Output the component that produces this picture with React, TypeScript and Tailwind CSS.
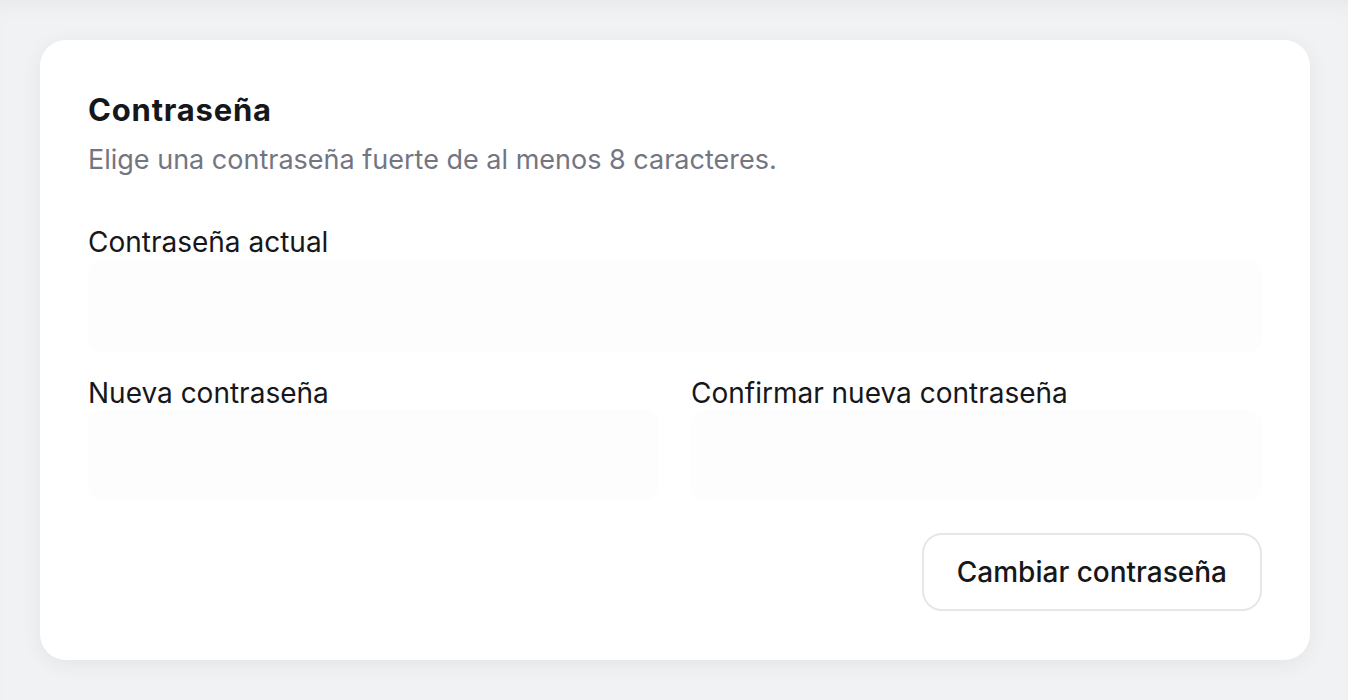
export default function App() {
  return (
    <div
      className="min-h-[700px] w-full bg-[#f1f2f4] pt-10 pl-10 pr-[38px] pb-10 shadow-[inset_0_16px_24px_-14px_rgba(0,0,0,0.05)]"
      style={{ fontFamily: "Inter, 'Noto Sans', sans-serif" }}
    >
      {/* Card */}
      <div className="rounded-[26px] bg-white px-12 pt-[52px] pb-[49px] shadow-[0_4px_22px_rgba(20,24,40,0.06)]">
        <h2 className="text-[31px] leading-[36px] font-bold tracking-[0.8px] text-[#16171a]">
          Contraseña
        </h2>
        <p className="mt-[15px] text-[27px] leading-[34px] text-[#737682]">
          Elige una contraseña fuerte de al menos 8 caracteres.
        </p>

        <div className="mt-[48px] flex flex-col gap-[1px]">
          <label className="text-[28px] leading-[34px] text-[#16171a]">
            Contraseña actual
          </label>
          <input
            type="password"
            className="h-[92px] w-full rounded-[14px] bg-[#fdfdfd] outline-none"
          />
        </div>

        <div className="mt-[24px] grid grid-cols-2 gap-[32px]">
          <div className="flex flex-col">
            <label className="text-[28px] leading-[34px] text-[#16171a]">
              Nueva contraseña
            </label>
            <input
              type="password"
              className="h-[90px] w-full rounded-[14px] bg-[#fdfdfd] outline-none"
            />
          </div>
          <div className="flex flex-col">
            <label className="text-[28px] leading-[34px] text-[#16171a]">
              Confirmar nueva contraseña
            </label>
            <input
              type="password"
              className="h-[90px] w-full rounded-[14px] bg-[#fdfdfd] outline-none"
            />
          </div>
        </div>

        <div className="mt-[33px] flex justify-end">
          <button className="h-[78px] rounded-[20px] border-2 border-[#e6e7ea] bg-white px-[33px] text-[28px] font-medium text-[#16171a]">
            Cambiar contraseña
          </button>
        </div>
      </div>
    </div>
  );
}
